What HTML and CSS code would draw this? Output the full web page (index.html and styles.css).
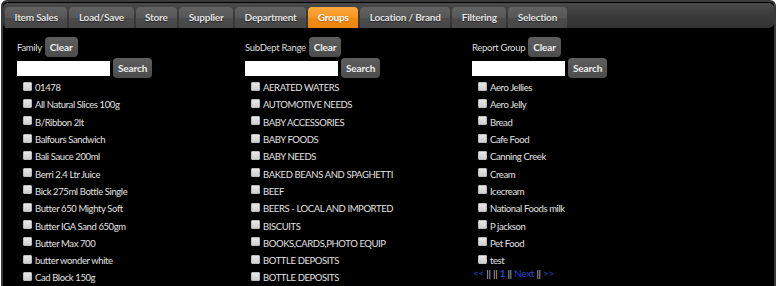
FILE: index.html
```html
<!DOCTYPE html>
<html lang="en">

<head>
    <meta charset="UTF-8" />
    <title>Report Groups</title>
    <link rel="stylesheet" href="styles.css">
</head>

<body>
    <div class="panel">
        <!-- Tabs -->
        <ul class="tab-bar">
            <li class="tab">Item Sales</li>
            <li class="tab">Load/Save</li>
            <li class="tab">Store</li>
            <li class="tab">Supplier</li>
            <li class="tab">Department</li>
            <li class="tab active">Groups</li>
            <li class="tab">Location / Brand</li>
            <li class="tab">Filtering</li>
            <li class="tab">Selection</li>
        </ul>

        <div class="groups">
            <!-- Family -->
            <div class="group-col">
                <div class="label-row">Family <button class="btn">Clear</button></div>
                <div class="search-row"><input class="search-box" type="text" /><button class="btn">Search</button></div>
                <ul class="pick-list">
                    <li><input type="checkbox" class="tick" /><span>01478</span></li>
                    <li><input type="checkbox" class="tick" /><span>All Natural Slices 100g</span></li>
                    <li><input type="checkbox" class="tick" /><span>B/Ribbon 2lt</span></li>
                    <li><input type="checkbox" class="tick" /><span>Balfours Sandwich</span></li>
                    <li><input type="checkbox" class="tick" /><span>Bali Sauce 200ml</span></li>
                    <li><input type="checkbox" class="tick" /><span>Berri 2.4 Ltr Juice</span></li>
                    <li><input type="checkbox" class="tick" /><span>Bick 275ml Bottle Single</span></li>
                    <li><input type="checkbox" class="tick" /><span>Butter 650 Mighty Soft</span></li>
                    <li><input type="checkbox" class="tick" /><span>Butter IGA Sand 650gm</span></li>
                    <li><input type="checkbox" class="tick" /><span>Butter Max 700</span></li>
                    <li><input type="checkbox" class="tick" /><span>butter wonder white</span></li>
                    <li><input type="checkbox" class="tick" /><span>Cad Block 150g</span></li>
                </ul>
            </div>

            <!-- SubDept Range -->
            <div class="group-col">
                <div class="label-row">SubDept Range <button class="btn">Clear</button></div>
                <div class="search-row"><input class="search-box" type="text" /><button class="btn">Search</button></div>
                <ul class="pick-list">
                    <li><input type="checkbox" class="tick" /><span>AERATED WATERS</span></li>
                    <li><input type="checkbox" class="tick" /><span>AUTOMOTIVE NEEDS</span></li>
                    <li><input type="checkbox" class="tick" /><span>BABY ACCESSORIES</span></li>
                    <li><input type="checkbox" class="tick" /><span>BABY FOODS</span></li>
                    <li><input type="checkbox" class="tick" /><span>BABY NEEDS</span></li>
                    <li><input type="checkbox" class="tick" /><span>BAKED BEANS AND SPAGHETTI</span></li>
                    <li><input type="checkbox" class="tick" /><span>BEEF</span></li>
                    <li><input type="checkbox" class="tick" /><span>BEERS - LOCAL AND IMPORTED</span></li>
                    <li><input type="checkbox" class="tick" /><span>BISCUITS</span></li>
                    <li><input type="checkbox" class="tick" /><span>BOOKS,CARDS,PHOTO EQUIP</span></li>
                    <li><input type="checkbox" class="tick" /><span>BOTTLE DEPOSITS</span></li>
                    <li><input type="checkbox" class="tick" /><span>BOTTLE DEPOSITS</span></li>
                </ul>
            </div>

            <!-- Report Group -->
            <div class="group-col">
                <div class="label-row">Report Group <button class="btn">Clear</button></div>
                <div class="search-row"><input class="search-box" type="text" /><button class="btn">Search</button></div>
                <ul class="pick-list">
                    <li><input type="checkbox" class="tick" /><span>Aero Jellies</span></li>
                    <li><input type="checkbox" class="tick" /><span>Aero Jelly</span></li>
                    <li><input type="checkbox" class="tick" /><span>Bread</span></li>
                    <li><input type="checkbox" class="tick" /><span>Cafe Food</span></li>
                    <li><input type="checkbox" class="tick" /><span>Canning Creek</span></li>
                    <li><input type="checkbox" class="tick" /><span>Cream</span></li>
                    <li><input type="checkbox" class="tick" /><span>Icecream</span></li>
                    <li><input type="checkbox" class="tick" /><span>National Foods milk</span></li>
                    <li><input type="checkbox" class="tick" /><span>P jackson</span></li>
                    <li><input type="checkbox" class="tick" /><span>Pet Food</span></li>
                    <li><input type="checkbox" class="tick" /><span>test</span></li>
                </ul>
                <div class="pager">
                    <a href="#">&lt;&lt;</a> || || <a href="#" class="current">1</a> || <a href="#">Next</a> || <a href="#">&gt;&gt;</a>
                </div>
            </div>
        </div>
    </div>
</body>

</html>
```

FILE: styles.css
```css
html,
body {
    margin: 0;
    padding: 0;
    background: #fff;
    font-family: Lato, 'Liberation Sans', sans-serif;
    overflow: hidden;
}

.panel {
    margin-left: 1px;
    width: 775px;
    height: 286px;
    box-sizing: border-box;
    padding-top: 1px;
    background: #000;
    border: 2px solid #3a3a3a;
    border-bottom: none;
    border-radius: 6px 6px 0 0;
}

/* Tabs */
.tab-bar {
    display: flex;
    gap: 2px;
    list-style: none;
    margin: 0;
    height: 25px;
    box-sizing: border-box;
    padding: 4px 0 0 2px;
    background: linear-gradient(#4a4a4a, #3a3a3a 50%, #333);
    border-radius: 5px;
}

.tab {
    height: 21px;
    line-height: 21px;
    padding: 0 9.5px;
    font-size: 10px;
    font-weight: bold;
    letter-spacing: -0.2px;
    color: #e4e4e4;
    text-shadow: 0 1px 1px #222;
    border-radius: 4px 4px 0 0;
    background: linear-gradient(#626262, #575757 50%, #4c4c4c 52%, #474747);
}

.tab.active {
    color: #fff;
    text-shadow: 0 1px 1px #b35f00;
    background: linear-gradient(#fba73f, #f7961f 50%, #f08a12 52%, #ec8610);
}

/* Three columns */
.groups {
    display: grid;
    grid-template-columns: 228px 227px 228px;
    padding: 9px 0 0 14px;
}

.label-row {
    display: flex;
    align-items: center;
    gap: 3px;
    height: 20px;
    font-size: 9.5px;
    letter-spacing: -0.3px;
    color: #ddd;
}

.btn {
    height: 20px;
    padding: 0 5px;
    border: none;
    border-radius: 4px;
    background: linear-gradient(#5e5e5e, #4c4c4c);
    color: #eee;
    font-family: Lato, 'Liberation Sans', sans-serif;
    font-size: 10px;
    font-weight: bold;
    letter-spacing: -0.1px;
}

.search-row {
    display: flex;
    align-items: center;
    gap: 3px;
    margin-top: 1px;
}

.search-box {
    width: 93px;
    height: 15px;
    padding: 0;
    border: none;
    background: #fff;
}

.pick-list {
    list-style: none;
    margin: 1px 0 0;
    padding: 0 0 0 6px;
}

.pick-list li {
    display: flex;
    align-items: center;
    height: 17.3px;
    font-size: 9.5px;
    letter-spacing: -0.4px;
    color: #e2e2e2;
}

.tick {
    appearance: none;
    width: 9px;
    height: 9px;
    margin: -3px 3px 0 0;
    border: 1px solid #bbb;
    border-radius: 1px;
    background: linear-gradient(#e8e8e8, #cfcfcf);
}

.pager {
    margin: -2px 0 0 1px;
    font-size: 10px;
    letter-spacing: -0.3px;
    line-height: 12px;
    color: #ccc;
}

.pager a {
    color: #2448c8;
    text-decoration: none;
}

.pager a.current {
    font-weight: bold;
}
```
